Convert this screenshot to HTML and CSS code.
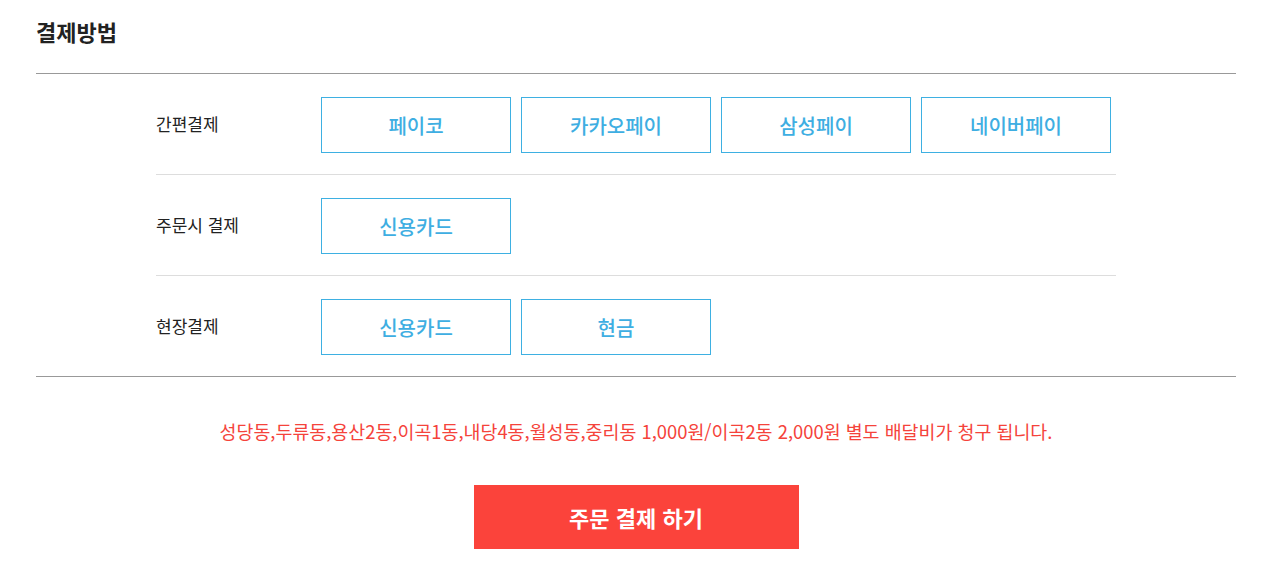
FILE: index.html
```html
<!DOCTYPE html>
<html lang="ko">
<head>
    <meta charset="UTF-8">
    <meta name="viewport" content="width=device-width, initial-scale=1.0">
    <title>결제방법</title>
    <link rel="stylesheet" href="styles.css">
</head>
<body>
    <div class="container">
        <h2 class="section-title">결제방법</h2>

        <div class="pay-box">
            <div class="pay-row">
                <div class="pay-label">간편결제</div>
                <div class="pay-options">
                    <button class="pay-btn">페이코</button>
                    <button class="pay-btn">카카오페이</button>
                    <button class="pay-btn">삼성페이</button>
                    <button class="pay-btn">네이버페이</button>
                </div>
            </div>
            <div class="pay-row">
                <div class="pay-label">주문시 결제</div>
                <div class="pay-options">
                    <button class="pay-btn">신용카드</button>
                </div>
            </div>
            <div class="pay-row">
                <div class="pay-label">현장결제</div>
                <div class="pay-options">
                    <button class="pay-btn">신용카드</button>
                    <button class="pay-btn">현금</button>
                </div>
            </div>
        </div>

        <p class="delivery-notice">성당동,두류동,용산2동,이곡1동,내당4동,월성동,중리동 1,000원/이곡2동 2,000원 별도 배달비가 청구 됩니다.</p>

        <div class="order-area">
            <button class="order-btn">주문 결제 하기</button>
        </div>
    </div>
</body>
</html>
```

FILE: styles.css
```css
* {
    margin: 0;
    padding: 0;
    box-sizing: border-box;
}

body {
    font-family: 'Noto Sans CJK KR', 'Noto Sans', sans-serif;
    background: #ffffff;
    color: #222222;
}

.container {
    width: 1200px;
    margin-left: 36px;
}

.section-title {
    font-size: 22px;
    font-weight: bold;
    color: #222222;
    line-height: 30px;
    padding: 16px 0 27px 0;
}

/* 결제수단 목록 */
.pay-box {
    border-top: 1px solid #999999;
    border-bottom: 1px solid #999999;
    padding: 0 120px;
}

.pay-row {
    display: flex;
    align-items: center;
    padding: 23px 0 21px;
    border-bottom: 1px solid #dddddd;
}

.pay-row:last-child {
    border-bottom: none;
}

.pay-label {
    width: 165px;
    font-size: 17px;
    color: #222222;
    margin-top: -3px;
}

.pay-options {
    display: flex;
    gap: 10px;
}

.pay-btn {
    width: 190px;
    height: 56px;
    background: #ffffff;
    border: 1px solid #3eb0e2;
    color: #3eaee2;
    font-family: inherit;
    font-size: 20px;
    font-weight: 500;
    cursor: pointer;
}

.delivery-notice {
    text-align: center;
    font-size: 18.4px;
    color: #f5433b;
    line-height: 24px;
    margin-top: 42px;
}

.order-area {
    display: flex;
    justify-content: center;
    margin-top: 42px;
}

.order-btn {
    width: 325px;
    height: 64px;
    background: #fb433b;
    border: none;
    color: #ffffff;
    font-family: inherit;
    font-size: 22px;
    font-weight: bold;
    cursor: pointer;
}
```
